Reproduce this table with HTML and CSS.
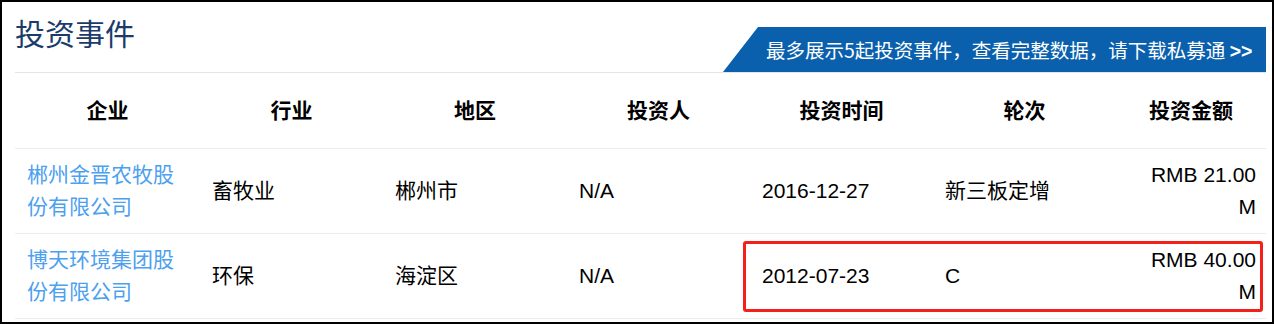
FILE: index.html
```html
<!DOCTYPE html>
<html lang="zh-CN">
<head>
<meta charset="utf-8">
<title>投资事件</title>
<link rel="stylesheet" href="styles.css">
</head>
<body>
<section class="panel">
  <header class="panel-head">
    <h2 class="panel-title">投资事件</h2>
    <a class="promo" href="#">最多展示5起投资事件，查看完整数据，请下载私募通 <b>&gt;&gt;</b></a>
  </header>
  <div class="table">
    <div class="row row-head">
      <div class="cell">企业</div>
      <div class="cell">行业</div>
      <div class="cell">地区</div>
      <div class="cell">投资人</div>
      <div class="cell">投资时间</div>
      <div class="cell">轮次</div>
      <div class="cell">投资金额</div>
    </div>
    <div class="row">
      <div class="cell"><a class="company" href="#">郴州金晋农牧股份有限公司</a></div>
      <div class="cell">畜牧业</div>
      <div class="cell">郴州市</div>
      <div class="cell">N/A</div>
      <div class="cell">2016-12-27</div>
      <div class="cell">新三板定增</div>
      <div class="cell amount">RMB 21.00 M</div>
    </div>
    <div class="row row-marked">
      <div class="cell"><a class="company" href="#">博天环境集团股份有限公司</a></div>
      <div class="cell">环保</div>
      <div class="cell">海淀区</div>
      <div class="cell">N/A</div>
      <div class="cell">2012-07-23</div>
      <div class="cell">C</div>
      <div class="cell amount">RMB 40.00 M</div>
      <span class="mark"></span>
    </div>
  </div>
</section>
</body>
</html>
```

FILE: styles.css
```css
html, body {
  margin: 0;
  padding: 0;
  background: #fff;
}

.panel {
  box-sizing: border-box;
  width: 1274px;
  height: 324px;
  border: 2px solid #000;
  padding: 0 6px 0 13px;
  font-family: "Liberation Sans", "Noto Sans CJK SC", sans-serif;
  color: #000;
  overflow: hidden;
}

.panel-head {
  box-sizing: border-box;
  height: 71px;
  border-bottom: 1px solid #e6e6e6;
  display: flex;
  justify-content: space-between;
  align-items: flex-end;
}

.panel-title {
  align-self: flex-start;
  margin: 12px 0 0 0;
  font-family: "Noto Sans CJK SC", sans-serif;
  font-size: 30px;
  font-weight: normal;
  line-height: 36px;
  color: #1b3c6b;
}

.promo {
  box-sizing: border-box;
  width: 543px;
  height: 45px;
  padding-left: 43px;
  background: #0a60ad;
  clip-path: polygon(35px 0, 100% 0, 100% 100%, 0 100%);
  color: #fff;
  font-family: "Noto Sans CJK SC", sans-serif;
  font-size: 19.5px;
  line-height: 45px;
  white-space: nowrap;
  text-decoration: none;
}

.promo b {
  font-family: "Liberation Sans", sans-serif;
  font-weight: bold;
}

.table {
  display: flex;
  flex-direction: column;
}

.row {
  position: relative;
  display: grid;
  grid-template-columns: 185px 183px 184px 183px 183px 183px 1fr;
  align-items: center;
  border-bottom: 1px solid #ececec;
  padding: 10px 0;
  font-size: 21px;
  line-height: 32px;
}

.row-head {
  padding: 22px 0 21px;
  font-weight: bold;
}

.row-head .cell {
  text-align: center;
  padding: 0;
}

.cell {
  padding: 0 10px 0 12px;
}

.cell.amount {
  padding-left: 24px;
  text-align: right;
}

.company {
  color: #4d9ff0;
  text-decoration: none;
}

.mark {
  position: absolute;
  left: 728px;
  right: 3px;
  top: 7px;
  bottom: 6px;
  border: 3px solid #f5201a;
  border-radius: 3px;
  pointer-events: none;
}
```
